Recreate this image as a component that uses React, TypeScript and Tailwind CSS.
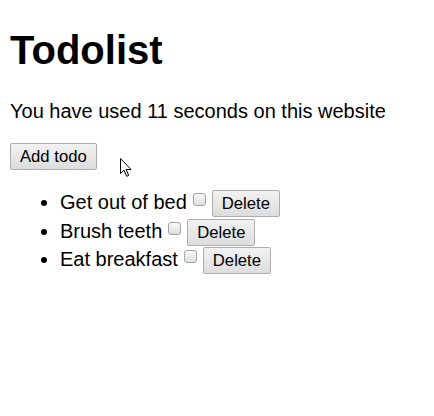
import * as React from "react";

const todos = ["Get out of bed", "Brush teeth", "Eat breakfast"];

function Btn({ children }: { children: React.ReactNode }) {
  return (
    <button className="inline-block align-baseline text-[16.67px] leading-[19px] px-[9px] py-[3px] border border-[#adadad] rounded-[2px] bg-gradient-to-b from-[#f2f2f2] to-[#dddddd] text-black">
      {children}
    </button>
  );
}

function Check() {
  return (
    <span className="inline-block align-baseline w-[16px] h-[16px] ml-[5px] mr-[4px] relative top-[-1px]">
      <span className="absolute left-[1px] top-[1px] w-[13px] h-[13px] rounded-[3px] border border-[#a3a3a3] bg-gradient-to-b from-[#fafafa] to-[#dedede]" />
    </span>
  );
}

export default function App() {
  return (
    <div className="relative min-h-[416px] bg-white px-[10px] pt-[1px] font-['Liberation_Sans',Arial,sans-serif] text-[20px] text-black">
      <h1 className="mt-[26px] mb-[27px] text-[40px] font-bold leading-[46px]">Todolist</h1>
      <p className="mb-[17px] leading-[23px]">You have used 11 seconds on this website</p>
      <div>
        <Btn>Add todo</Btn>
      </div>
      <ul className="my-[20px] list-disc pl-[50px]">
        {todos.map((t) => (
          <li key={t} className="leading-[23px] pb-[1.5px]">
            {t}
            <Check />
            <Btn>Delete</Btn>
          </li>
        ))}
      </ul>
      <svg
        className="absolute left-[120px] top-[158px]"
        width="13"
        height="20"
        viewBox="0 0 13 20"
      >
        <path
          d="M0.5 0.5 L0.5 15.5 L4 12.2 L6.6 18.3 L8.7 17.4 L6.2 11.5 L11 11.5 Z"
          fill="#ffffff"
          stroke="#000000"
          strokeWidth="1"
          strokeLinejoin="round"
        />
      </svg>
    </div>
  );
}
